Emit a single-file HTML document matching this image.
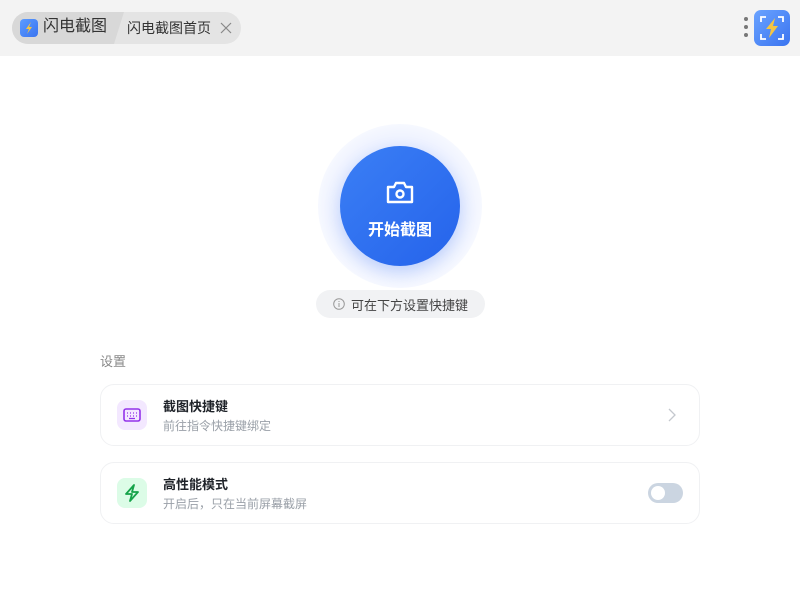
<!DOCTYPE html>
<html><head><meta charset="utf-8"><style>
*{box-sizing:border-box;margin:0;padding:0}
body{width:800px;height:600px;background:#fff;font-family:"Liberation Sans","Noto Sans CJK SC",sans-serif;position:relative;overflow:hidden}
.top{position:absolute;left:0;top:0;width:800px;height:56px;background:#f3f3f3}
.tabs{position:absolute;left:12px;top:12px;height:32px;width:229px;border-radius:16px;background:#e4e4e4;overflow:hidden}
.t1{position:absolute;left:0;top:0;height:32px;width:112px;background:#d8d8d8;clip-path:polygon(0 0,100% 0,calc(100% - 10px) 100%,0 100%)}
.ico{position:absolute;width:18px;height:18px;border-radius:4px;background:linear-gradient(135deg,#5b9bff,#3a74f0)}
.txt{position:absolute;color:#333;white-space:nowrap}
.card{position:absolute;left:100px;width:600px;height:62px;border:1px solid #f0f1f3;border-radius:14px;background:#fff}
.ci{position:absolute;left:16px;top:15px;width:30px;height:30px;border-radius:8px}
.ct{position:absolute;left:62px;top:11px;font-size:13px;font-weight:bold;color:#1f2329}
.cs{position:absolute;left:62px;top:32px;font-size:12px;color:#9aa0a8}
</style></head><body>
<div class="top">
 <div class="tabs">
  <div class="t1"></div>
  <div class="ico" style="left:8px;top:7px"><svg width="18" height="18" viewBox="0 0 18 18"><path d="M11 3L6 10h3l-2 5 5-7H9z" fill="#f5c542"/></svg></div>
  <div class="txt" style="left:31px;top:5px;font-size:16px;line-height:20px">闪电截图</div>
  <div class="txt" style="left:115px;top:7px;font-size:14px;line-height:18px">闪电截图首页</div>
  <svg style="position:absolute;left:208px;top:10px" width="12" height="12"><path d="M1 1L11 11M11 1L1 11" stroke="#888" stroke-width="1.2"/></svg>
 </div>
 <div style="position:absolute;left:744px;top:17px;width:4px;height:4px;border-radius:2px;background:#777"></div>
 <div style="position:absolute;left:744px;top:25px;width:4px;height:4px;border-radius:2px;background:#777"></div>
 <div style="position:absolute;left:744px;top:33px;width:4px;height:4px;border-radius:2px;background:#777"></div>
 <div style="position:absolute;left:754px;top:10px;width:36px;height:36px;border-radius:7px;background:linear-gradient(135deg,#6aa3ff,#3a74f0)">
  <svg width="36" height="36" viewBox="0 0 36 36"><path d="M7 12V7h5M24 7h5v5M29 24v5h-5M12 29H7v-5" stroke="#fff" stroke-width="1.8" fill="none"/><path d="M21 8L12 19h5l-2 9 9-12h-5z" fill="#f5c542"/></svg>
 </div>
</div>
<div style="position:absolute;left:318px;top:124px;width:164px;height:164px;border-radius:50%;background:radial-gradient(circle,#e6ecff 45%,#f7f9ff 72%,rgba(255,255,255,0) 100%)"></div>
<div style="position:absolute;left:340px;top:146px;width:120px;height:120px;border-radius:50%;background:linear-gradient(135deg,#3b7ff5,#2563eb);box-shadow:0 6px 16px rgba(37,99,235,.22)">
 <svg style="position:absolute;left:45px;top:34px" width="30" height="26" viewBox="0 0 30 26"><path d="M3 7h6l2-4h8l2 4h6v15H3z" stroke="#fff" stroke-width="2.4" fill="none" stroke-linejoin="round"/><circle cx="15" cy="14" r="3.5" stroke="#fff" stroke-width="2.4" fill="none"/></svg>
 <div style="position:absolute;left:0;width:120px;top:70px;text-align:center;color:#fff;font-size:16px;font-weight:bold">开始截图</div>
</div>
<div style="position:absolute;left:316px;top:290px;width:169px;height:28px;border-radius:14px;background:#f1f2f4">
 <svg style="position:absolute;left:17px;top:8px" width="12" height="12"><circle cx="6" cy="6" r="5.3" stroke="#999" fill="none"/><path d="M6 5v4M6 3v1" stroke="#999"/></svg>
 <div style="position:absolute;left:35px;top:5px;font-size:13px;color:#444">可在下方设置快捷键</div>
</div>
<div style="position:absolute;left:100px;top:351px;font-size:13px;color:#888">设置</div>
<div class="card" style="top:384px">
 <div class="ci" style="background:#f3e8ff"><svg width="30" height="30"><rect x="7" y="9" width="16" height="12" rx="2" stroke="#9333ea" stroke-width="1.6" fill="none"/><path d="M10 13h1M13 13h1M16 13h1M19 13h1M10 16h1M13 16h1M16 16h1M19 16h1M12 18.5h6" stroke="#9333ea" stroke-width="1.2"/></svg></div>
 <div class="ct">截图快捷键</div><div class="cs">前往指令快捷键绑定</div>
 <svg style="position:absolute;left:567px;top:23px" width="8" height="14"><path d="M1 1l6 6-6 6" stroke="#c4c8ce" stroke-width="1.3" fill="none"/></svg>
</div>
<div class="card" style="top:462px">
 <div class="ci" style="background:#dcfce7"><svg width="30" height="30"><path d="M17 7l-8 9h6l-2 7 8-9h-6z" stroke="#16a34a" stroke-width="1.8" fill="none" stroke-linejoin="round"/></svg></div>
 <div class="ct">高性能模式</div><div class="cs">开启后，只在当前屏幕截屏</div>
 <div style="position:absolute;left:547px;top:20px;width:35px;height:20px;border-radius:10px;background:#cbd5e1"><div style="position:absolute;left:3px;top:3px;width:14px;height:14px;border-radius:50%;background:#fff"></div></div>
</div>
</body></html>
